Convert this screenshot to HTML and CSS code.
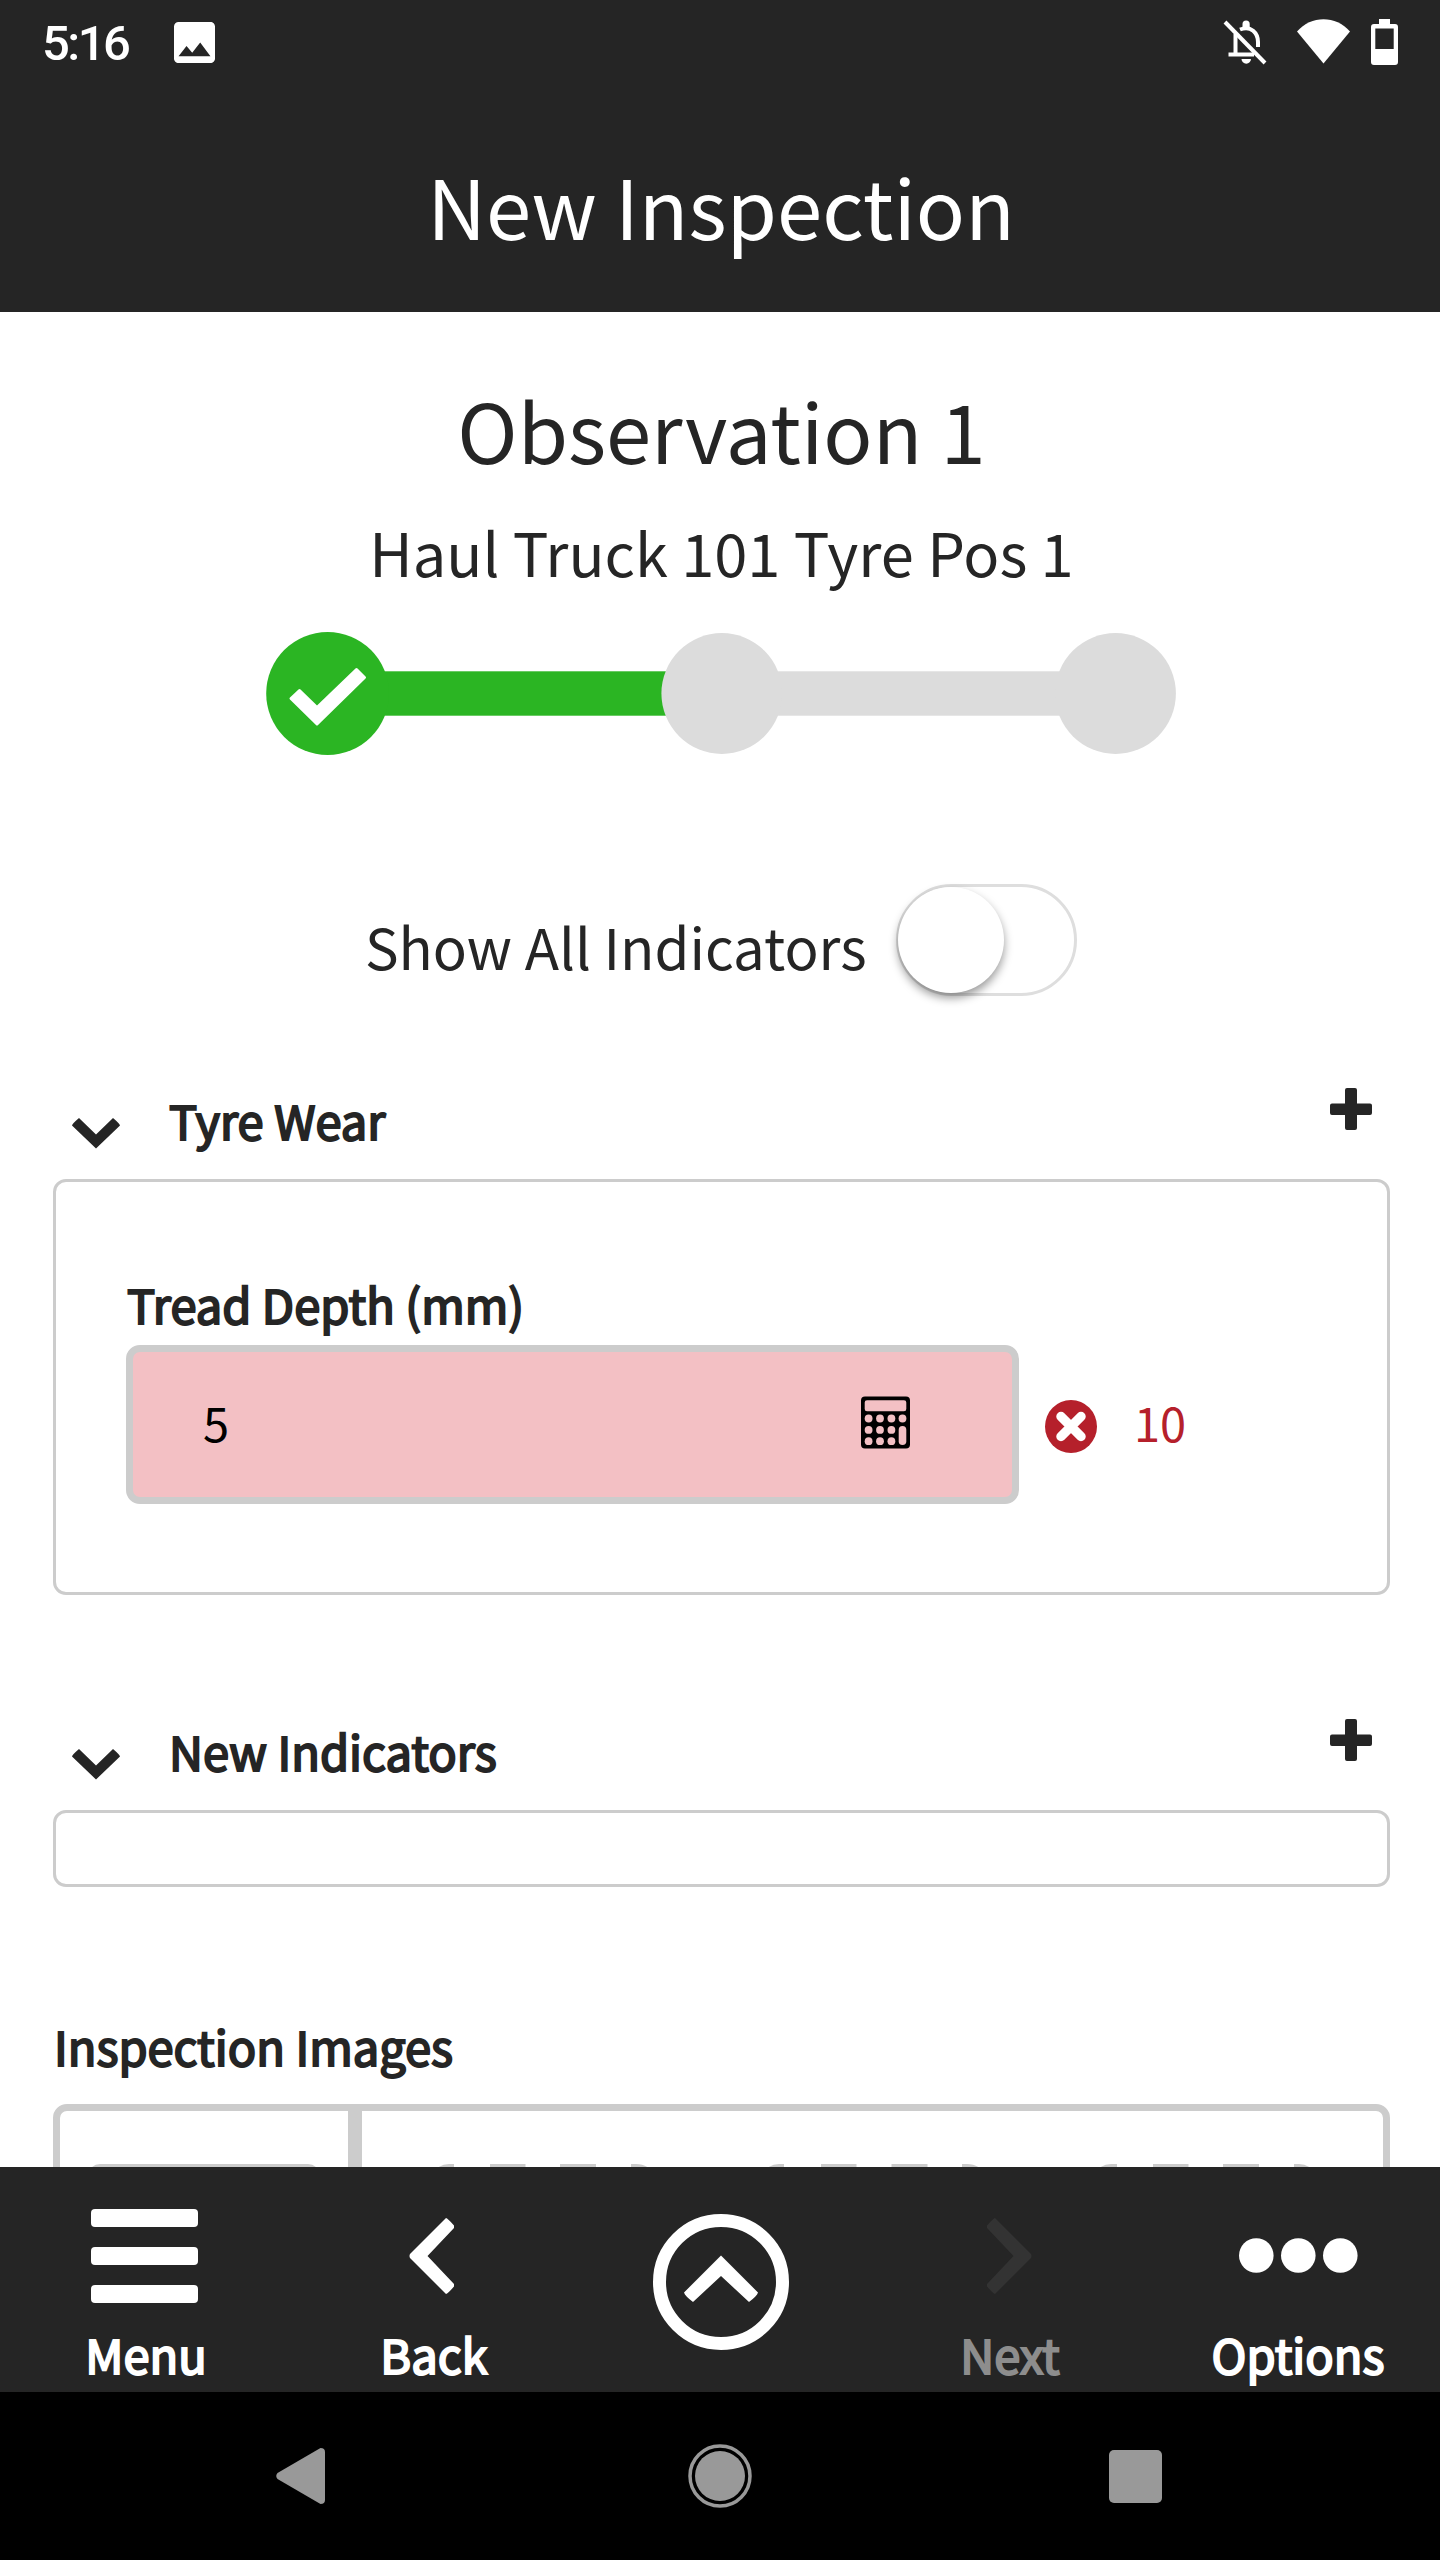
FILE: index.html
```html
<!DOCTYPE html>
<html lang="en">
<head>
<meta charset="utf-8">
<title>New Inspection</title>
<link rel="stylesheet" href="styles.css">
</head>
<body>
<header class="topbar">
  <div class="status">
    <span class="clock">5:16</span>
    <svg class="st-image" viewBox="3 3 18 18"><path fill="#fff" d="M21 19V5c0-1.100-.9-2-2-2H5c-1.100 0-2 .9-2 2v14c0 1.100.9 2 2 2h14c1.100 0 2-.9 2-2zM8.500 13.500l2.500 3.010L14.500 12l4.500 6H5l3.500-4.500z"/></svg>
    <span class="grow"></span>
    <svg class="st-bell" viewBox="0 0 44 45" fill="none" stroke="#fff"><path stroke-width="4" d="M2 2 L42 43"/><path stroke-width="4" d="M12.500 14 V34 M5.500 34.500 H31 M17 9.500 C28 5 35 13 35 22 V27"/><path fill="#fff" stroke="none" d="M19.500 7V4a3.600 3.600 0 0 1 7.200 0v3zM18.500 39h9.500a4.700 4.700 0 0 1-9.500 0z"/></svg>
    <svg class="st-wifi" viewBox="0 0 53 45"><path fill="#fff" d="M26.500 44.500 L0 12.500 C14 -4 39 -4 53 12.500 Z"/></svg>
    <svg class="st-batt" viewBox="0 0 27 46"><path fill="#fff" fill-rule="evenodd" d="M8 0h11v5h5q3 0 3 3v35q0 3-3 3H3q-3 0-3-3V8q0-3 3-3h5zM4.300 9.500v20.500h18.400V9.500z"/></svg>
  </div>
  <div class="title">New Inspection</div>
</header>

<main class="content">
  <h1 class="heading">Observation 1</h1>
  <h2 class="subheading">Haul Truck 101 Tyre Pos 1</h2>
  <svg class="stepper" viewBox="0 0 911 123">
    <rect x="61" y="39.300" width="400" height="44.400" fill="#2bb523"/>
    <rect x="461" y="39.300" width="390" height="44.400" fill="#dcdcdc"/>
    <circle cx="61.600" cy="61.500" r="61.400" fill="#2bb523"/>
    <circle cx="455.800" cy="61.500" r="60.400" fill="#dcdcdc"/>
    <circle cx="849.500" cy="61.500" r="60.400" fill="#dcdcdc"/>
    <path fill="#fff" stroke="#fff" stroke-width="3" stroke-linejoin="round" d="M33.500 58.500L51 75.500 90.500 37.500 98.500 45.500 51 92 25 66.500z"/>
  </svg>
  <div class="toggle-row">
    <span class="toggle-label">Show All Indicators</span>
    <span class="toggle"><span class="knob"></span></span>
  </div>

  <section class="group">
    <div class="group-head">
      <svg class="caret" viewBox="0 0 48 31"><path fill="#252525" d="M0 7.500Q0 6 7 0L24 16.500 41 0Q48 6 48 7.500L24 30.500z"/></svg>
      <span class="label">Tyre Wear</span>
      <span class="grow"></span>
      <svg class="plus" viewBox="0 0 42 42"><path fill="#252525" d="M17 0h8q2 0 2 2v13.500h13q2 0 2 2v7.500q0 2-2 2H27v13q0 2-2 2h-8q-2 0-2-2V27H2q-2 0-2-2v-7.500q0-2 2-2h13V2q0-2 2-2z"/></svg>
    </div>
    <div class="card card-field">
      <span class="label">Tread Depth (mm)</span>
      <div class="field-row">
        <div class="field">
          <span>5</span>
          <svg class="calc" viewBox="0 0 49 52"><path fill="#000" fill-rule="evenodd" d="M4 0h41q4 0 4 4v44q0 4-4 4H4q-4 0-4-4V4q0-4 4-4zM6 3.700q-2.300 0-2.300 2.300v6.500q0 2.300 2.300 2.300h37q2.300 0 2.300-2.300V6q0-2.300-2.300-2.300z"/><g fill="#f3c0c4"><circle cx="7.600" cy="22" r="3.900"/><circle cx="19" cy="22" r="3.900"/><circle cx="30.400" cy="22" r="3.900"/><circle cx="41.500" cy="22" r="3.900"/><circle cx="7.600" cy="33.400" r="3.900"/><circle cx="19" cy="33.400" r="3.900"/><circle cx="30.400" cy="33.400" r="3.900"/><circle cx="7.600" cy="44.700" r="3.900"/><circle cx="19" cy="44.700" r="3.900"/><circle cx="30.400" cy="44.700" r="3.900"/><rect x="37.700" y="29.600" width="7.600" height="19" rx="3.800"/></g></svg>
        </div>
        <svg class="fail" viewBox="0 0 52 53"><ellipse cx="26" cy="26.500" rx="26" ry="26.400" fill="#b5202b"/><path d="M16 16.500 L36 36.500 M36 16.500 L16 36.500" stroke="#fff" stroke-width="9.500" stroke-linecap="round"/></svg>
        <span class="limit">10</span>
      </div>
    </div>
  </section>

  <section class="group group-second">
    <div class="group-head">
      <svg class="caret" viewBox="0 0 48 31"><path fill="#252525" d="M0 7.500Q0 6 7 0L24 16.500 41 0Q48 6 48 7.500L24 30.500z"/></svg>
      <span class="label">New Indicators</span>
      <span class="grow"></span>
      <svg class="plus" viewBox="0 0 42 42"><path fill="#252525" d="M17 0h8q2 0 2 2v13.500h13q2 0 2 2v7.500q0 2-2 2H27v13q0 2-2 2h-8q-2 0-2-2V27H2q-2 0-2-2v-7.500q0-2 2-2h13V2q0-2 2-2z"/></svg>
    </div>
    <div class="card card-empty"></div>
  </section>

  <section class="images">
    <span class="label">Inspection Images</span>
    <div class="gallery">
      <div class="add-photo"><div class="add-tile"></div></div>
      <svg class="slots" viewBox="0 0 872 7" fill="#ccc">
        <path d="M0 3.500Q5 0 11 0h5v7H0zM52 0h35.500v7H52zM122 0h36v7h-36zM193 0h5Q205 0 210 3.500V7h-17z"/>
        <path d="M330 3.500Q335 0 341 0h5v7H330zM383 0h35.500v7H383zM453.500 0h36v7h-36zM524 0h5Q536 0 541 3.500V7h-17z"/>
        <path d="M662 3.500Q667 0 673 0h6v7H662zM715 0h35.500v7H715zM785 0h36v7h-36zM856 0h5Q867 0 872 3.500V7h-16z"/>
      </svg>
    </div>
  </section>
</main>

<nav class="toolbar">
  <div class="tool"><svg class="i-menu" viewBox="0 0 107 94" fill="#fff"><rect width="107" height="18" rx="4"/><rect y="38" width="107" height="18" rx="4"/><rect y="76" width="107" height="18" rx="4"/></svg><span class="label">Menu</span></div>
  <div class="tool"><svg class="i-chev i-prev" viewBox="0 0 45 76"><path fill="#fff" d="M37 0Q38.500 0 45 7.500V10L18.500 38 45 66V68.500Q38.500 76 37 76L1 40Q0 38 1 36z"/></svg><span class="label">Back</span></div>
  <div class="tool"><svg class="i-up" viewBox="0 0 136 136"><circle cx="68" cy="68" r="61.500" fill="none" stroke="#fff" stroke-width="13"/><path fill="#fff" d="M68 41.500L105 78.500Q104 82 96 88L68 62 40 88Q32 82 31 78.500z"/></svg></div>
  <div class="tool tool-off"><svg class="i-chev i-next" viewBox="0 0 45 76"><path fill="#333" d="M8 0Q6.500 0 0 7.500V10L26.500 38 0 66V68.500Q6.500 76 8 76L44 40Q45 38 44 36z"/></svg><span class="label">Next</span></div>
  <div class="tool"><svg class="i-dots" viewBox="0 0 119 35" fill="#fff"><circle cx="17.300" cy="17.500" r="17.300"/><circle cx="59.300" cy="17.500" r="17.300"/><circle cx="101.300" cy="17.500" r="17.300"/></svg><span class="label">Options</span></div>
</nav>

<footer class="sysnav">
  <svg class="n-back" viewBox="0 0 49 56"><path fill="#999" d="M44.500 0Q49 0 49 4V52Q49 56 44.500 56L1.500 31Q-1 28 1.500 25z"/></svg>
  <svg class="n-home" viewBox="0 0 64 64"><circle cx="32" cy="32" r="30" fill="none" stroke="#999" stroke-width="3.500"/><circle cx="32" cy="32" r="25" fill="#999"/></svg>
  <span class="n-recent"></span>
</footer>
</body>
</html>
```
FILE: styles.css
```css
* { box-sizing: border-box; }

body {
  margin: 0;
  width: 1440px;
  height: 2560px;
  display: flex;
  flex-direction: column;
  overflow: hidden;
  background: #fff;
  color: #252525;
  font-family: "Noto Sans CJK SC", "Open Sans", sans-serif;
  font-size: 47px;
  line-height: 60px;
  white-space: nowrap;
}

svg { display: block; flex: none; }
.grow { flex: 1; }

/* Status bar and title */
.topbar { height: 312px; background: #252525; color: #fff; flex: none; }
.status { display: flex; align-items: flex-start; height: 108px; padding: 19px 42px 0 42px; }
.clock { font: 500 49px/50px Roboto, sans-serif; letter-spacing: -2.500px; width: 132px; }
.st-image { width: 41px; height: 41px; margin-top: 3px; }
.st-bell { width: 44px; height: 45px; margin: 1px 30px 0 0; }
.st-wifi { width: 53px; height: 45px; margin-right: 21px; }
.st-batt { width: 27px; height: 46px; }
.title { text-align: center; font-size: 81.400px; line-height: 100px; padding: 47px 0 0 2px; }

/* Page body */
.content { height: 1855px; flex: none; overflow: hidden; padding: 67px 50px 0 53px; }
.heading { margin: 0; font-size: 81.400px; line-height: 100px; font-weight: 400; text-align: center; }
.subheading { margin: 32px 0 0; font-size: 59.600px; line-height: 80px; font-weight: 400; text-align: center; }
.stepper { width: 911px; height: 123px; margin: 41px 0 0 213px; }

.toggle-row { display: flex; margin: 129px 0 0 312px; height: 112px; }
.toggle-label { font-size: 56.400px; line-height: 80px; margin-top: 22px; width: 531px; }
.toggle { width: 181px; height: 112px; border: 3px solid #dedede; border-radius: 56px; }
.knob { display: block; width: 106px; height: 106px; margin-left: -1px; border-radius: 50%; background: #fff; box-shadow: 0 5px 10px rgba(0, 0, 0, .4); }

/* Indicator groups */
.label { font-size: 47px; line-height: 60px; -webkit-text-stroke: 2px currentColor; }
.group { margin-top: 92px; }
.group-second { margin-top: 124px; }
.group-head { display: flex; height: 91px; padding: 0 18px 0 19px; align-items: flex-start; }
.group-head .label { margin: 2px 0 0 49px; }
.caret { width: 48px; height: 31px; margin-top: 30px; }
.plus { width: 42px; height: 42px; }
.card { border: 3px solid #ccc; border-radius: 13px; }
.card-field { height: 416px; padding: 92px 0 0 70px; display: flex; flex-direction: column; }
.card-field .label { margin-left: 1px; }
.card-empty { height: 77px; }
.field-row { display: flex; align-items: flex-start; margin-top: 11px; color: #b5202b; }
.field { width: 893px; height: 159px; border: 7px solid #ccc; border-radius: 14px; background: #f3c0c4; color: #000; display: flex; justify-content: space-between; padding: 40px 102px 0 70px; }
.calc { width: 49px; height: 53px; margin-top: 4px; }
.fail { width: 52px; height: 53px; margin: 55px 0 0 26px; }
.limit { margin: 47px 0 0 37px; }

/* Inspection images */
.images { display: flex; flex-direction: column; margin-top: 129px; }
.images .label { margin-left: 1px; }
.gallery { display: flex; height: 300px; margin-top: 28px; border: 7px solid #ccc; border-radius: 14px; }
.add-photo { width: 302px; border-right: 14px solid #ccc; padding: 53px 28px 0; }
.add-tile { height: 200px; border-radius: 12px; background: #ccc; }
.slots { width: 872px; height: 7px; margin: 53px 0 0 76px; }

/* App toolbar */
.toolbar { display: flex; height: 225px; flex: none; background: #252525; color: #fff; padding-left: 2px; }
.tool { width: 288px; display: flex; flex-direction: column; align-items: center; flex: none; height: 225px; }
.tool .label { margin-top: auto; margin-bottom: 8px; }
.tool-off { color: #8d8d8d; }
.i-menu { width: 107px; height: 94px; margin: 42px 4px 0 0; }
.i-chev { width: 45px; height: 76px; margin-top: 51px; }
.i-prev { margin-right: 5px; }
.i-next { margin-right: 1px; }
.i-up { width: 136px; height: 136px; margin: 47px 2px 0 0; }
.i-dots { width: 119px; height: 35px; margin-top: 71px; }

/* System navigation */
.sysnav { display: flex; align-items: center; height: 168px; flex: none; background: #000; padding-left: 276px; }
.n-back { width: 49px; height: 56px; }
.n-home { width: 64px; height: 64px; margin: 0 357px 0 363px; }
.n-recent { width: 53px; height: 53px; border-radius: 5px; background: #999; }
```
